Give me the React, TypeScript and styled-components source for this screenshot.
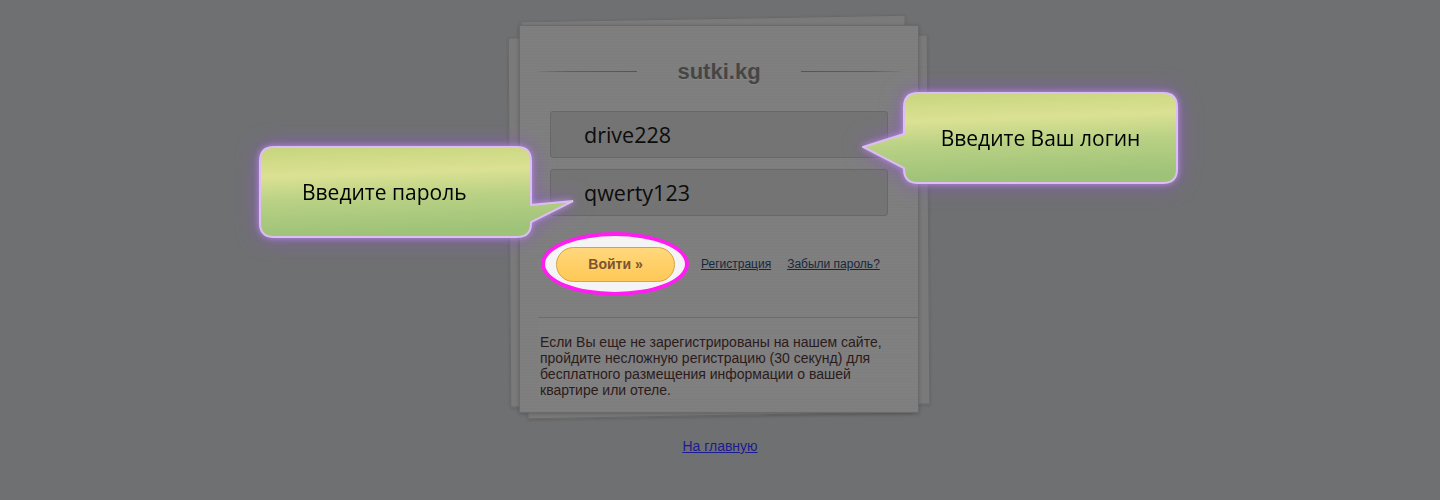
import styled, { createGlobalStyle } from "styled-components";

const GlobalStyle = createGlobalStyle`
	html, body {
		margin: 0;
		padding: 0;
		background: #6f7072;
		font-family: "Liberation Sans", Arial, sans-serif;
	}
`;

const Page = styled.div`
	position: relative;
	width: 1440px;
	height: 500px;
	overflow: hidden;
	display: flex;
	flex-direction: column;
	align-items: center;
	padding-top: 25px;
	box-sizing: border-box;
`;

const Stack = styled.div`
	position: relative;
	width: 400px;
	margin-left: -2px;

	&::before,
	&::after {
		content: "";
		position: absolute;
		background: #7a7a7a;
		border: 1px solid #686868;
		box-shadow: 0 1px 3px rgba(0, 0, 0, 0.15);
	}

	&::before {
		left: 5px;
		top: -7px;
		width: 383px;
		height: 396px;
		transform: rotate(-1deg);
	}

	&::after {
		left: -10px;
		top: 11px;
		width: 418px;
		height: 368px;
		transform: rotate(-0.4deg);
	}
`;

const Card = styled.div`
	position: relative;
	z-index: 1;
	background-color: #7f7f7f;
	background-image: repeating-linear-gradient(
		0deg,
		rgba(0, 0, 0, 0.018) 0 1px,
		transparent 1px 3px
	);
	border: 1px solid #6b6b6b;
	box-shadow: 0 1px 4px rgba(0, 0, 0, 0.2);
	box-sizing: border-box;
	padding-bottom: 14px;
`;

const TitleRow = styled.div`
	display: flex;
	align-items: center;
	justify-content: center;
	gap: 40px;
	padding: 32px 18px 0;
	height: 28px;

	span {
		font-size: 22px;
		font-weight: 700;
		color: #464646;
		text-shadow: 0 1px 0 rgba(255, 255, 255, 0.08);
		line-height: 28px;
	}
`;

const Rule = styled.div<{ $dir: "left" | "right" }>`
	flex: 1;
	height: 1px;
	margin-top: -2px;
	background: linear-gradient(
		${(p) => (p.$dir === "left" ? "to left" : "to right")},
		#555 0%,
		#5e5e5e 70%,
		rgba(110, 110, 110, 0.4) 100%
	);
`;

const Form = styled.div`
	display: flex;
	flex-direction: column;
	gap: 11px;
	padding: 25px 30px 0;
`;

const Field = styled.div`
	height: 47px;
	box-sizing: border-box;
	border: 1px solid #686868;
	border-radius: 3px;
	background: #747474;
	display: flex;
	align-items: center;
	padding-left: 33px;
	font-family: "Open Sans", "Noto Sans", sans-serif;
	font-size: 21.5px;
	color: #0c0c0c;
`;

const Actions = styled.div`
	display: flex;
	align-items: center;
	padding: 16px 0 0 21px;
`;

const Highlight = styled.div`
	width: 148px;
	height: 64px;
	box-sizing: border-box;
	border: 4px solid #ff1df2;
	border-radius: 50%;
	background: #f4f4f4;
	display: flex;
	align-items: center;
	justify-content: center;
	margin-right: 12px;
`;

const LoginButton = styled.button`
	width: 119px;
	height: 35px;
	margin-left: 1px;
	border: 1px solid #d6a43c;
	border-radius: 18px;
	background: linear-gradient(180deg, #ffd87e 0%, #ffcf68 50%, #ffc957 100%);
	font-family: "Liberation Sans", Arial, sans-serif;
	font-size: 14px;
	font-weight: 700;
	color: #7b5532;
	cursor: pointer;
`;

const Links = styled.div`
	display: flex;
	gap: 16px;

	a {
		font-size: 12px;
		color: #16283e;
		text-decoration: underline;
	}
`;

const Separator = styled.div`
	height: 1px;
	background: #6c6c6c;
	margin: 21px 0 0 18px;
`;

const Info = styled.div`
	margin-left: 18px;
	padding: 16px 0 0 2px;
	background: rgba(255, 255, 255, 0.012);

	p {
		margin: 0;
		width: 362px;
		font-size: 14px;
		line-height: 16px;
		color: #2c1b1b;
	}
`;

const HomeLink = styled.a`
	position: relative;
	z-index: 1;
	margin-top: 25px;
	font-size: 14px;
	line-height: 16px;
	color: #1c1c8e;
	text-decoration: underline;
`;

const Bubble = styled.div<{ $left: number; $top: number }>`
	position: absolute;
	z-index: 3;
	left: ${(p) => p.$left}px;
	top: ${(p) => p.$top}px;
	filter: drop-shadow(0 0 3px rgba(200, 150, 245, 0.8))
		drop-shadow(0 0 10px rgba(140, 90, 195, 0.75));

	svg {
		display: block;
	}
`;

const BubbleText = styled.div<{ $boxLeft: number; $pad: number; $center: boolean }>`
	position: absolute;
	top: 0;
	left: ${(p) => p.$boxLeft}px;
	width: 273px;
	height: 92px;
	display: flex;
	align-items: center;
	justify-content: ${(p) => (p.$center ? "center" : "flex-start")};
	padding-left: ${(p) => p.$pad}px;
	box-sizing: border-box;
	font-family: "Open Sans", "Noto Sans", sans-serif;
	font-size: 21px;
	color: #000;
`;

function Callout({
	left,
	top,
	side,
	text,
}: {
	left: number;
	top: number;
	side: "left" | "right";
	text: string;
}) {
	const id = `grad-${side}`;
	const path =
		side === "left"
			? "M15,1 H258 Q272,1 272,15 V59 L314,55 L272,76 V77 Q272,91 258,91 H15 Q1,91 1,77 V15 Q1,1 15,1 Z"
			: "M56,1 H301 Q315,1 315,15 V77 Q315,91 301,91 H56 Q42,91 42,77 V76 L1,55 L42,42 V15 Q42,1 56,1 Z";
	return (
		<Bubble $left={left} $top={top}>
			<svg width={316} height={92} viewBox='0 0 316 92'>
				<defs>
					<linearGradient id={id} x1='0' y1='0' x2='0.12' y2='1'>
						<stop offset='0' stopColor='#c6d57d' />
						<stop offset='0.33' stopColor='#dbe193' />
						<stop offset='0.6' stopColor='#b9d184' />
						<stop offset='1' stopColor='#9dc278' />
					</linearGradient>
				</defs>
				<path d={path} fill={`url(#${id})`} stroke='#dcbdf6' strokeWidth={2} />
			</svg>
			<BubbleText
				$boxLeft={side === "left" ? 0 : 42}
				$pad={side === "left" ? 43 : 0}
				$center={side === "right"}
			>
				{text}
			</BubbleText>
		</Bubble>
	);
}

function App() {
	return (
		<>
			<GlobalStyle />
			<Page>
				<Stack>
					<Card>
						<TitleRow>
							<Rule $dir='left' />
							<span>sutki.kg</span>
							<Rule $dir='right' />
						</TitleRow>
						<Form>
							<Field>drive228</Field>
							<Field>qwerty123</Field>
						</Form>
						<Actions>
							<Highlight>
								<LoginButton>Войти »</LoginButton>
							</Highlight>
							<Links>
								<a href='#'>Регистрация</a>
								<a href='#'>Забыли пароль?</a>
							</Links>
						</Actions>
						<Separator />
						<Info>
							<p>
								Если Вы еще не зарегистрированы на нашем сайте, пройдите
								несложную регистрацию (30 секунд) для бесплатного размещения
								информации о вашей квартире или отеле.
							</p>
						</Info>
					</Card>
				</Stack>
				<HomeLink href='#'>На главную</HomeLink>
				<Callout left={259} top={146} side='left' text='Введите пароль' />
				<Callout left={862} top={92} side='right' text='Введите Ваш логин' />
			</Page>
		</>
	);
}

export default App;
